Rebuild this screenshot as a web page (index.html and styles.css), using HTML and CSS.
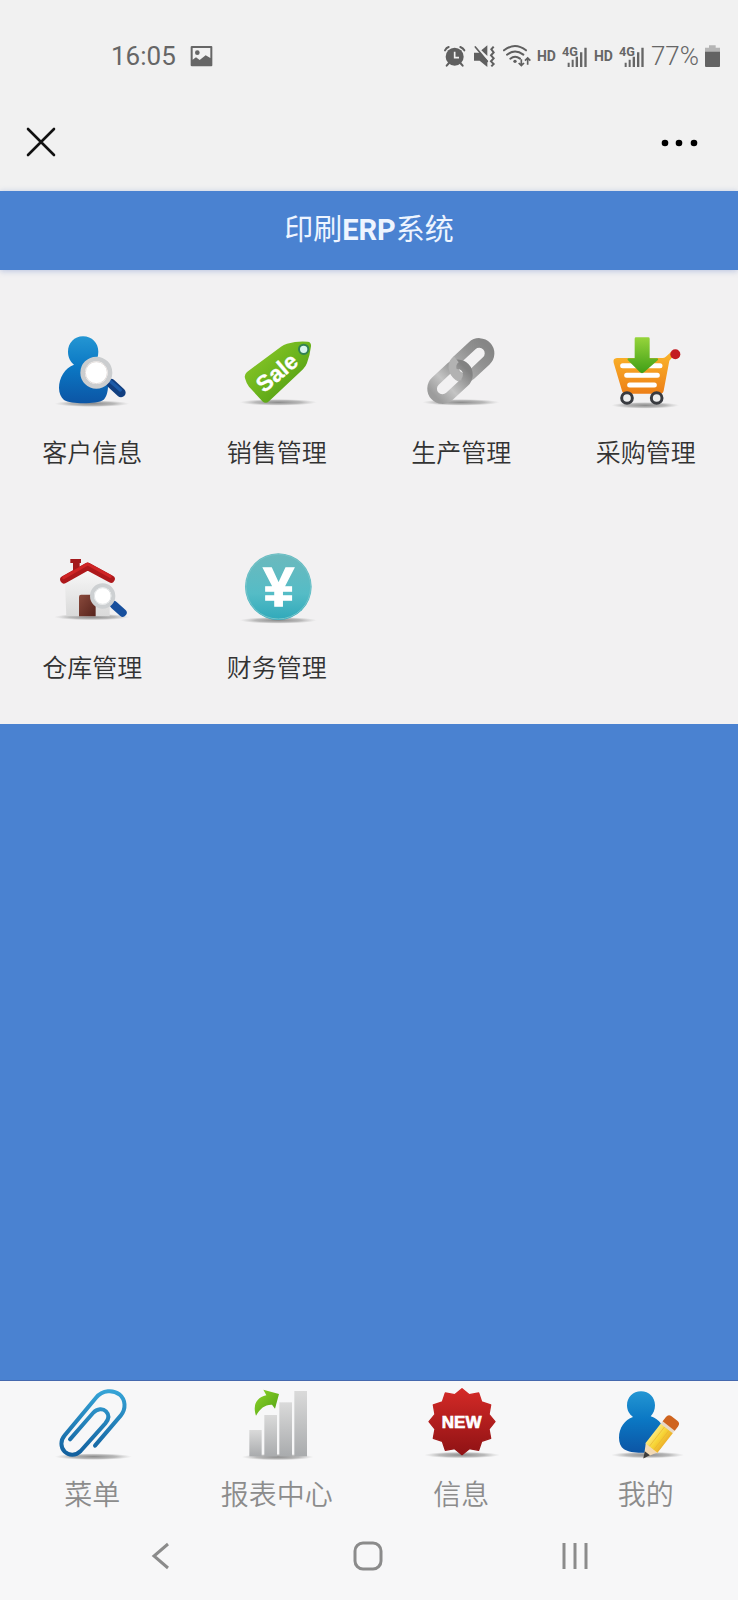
FILE: index.html
```
<!DOCTYPE html>
<html lang="zh-CN">
<head>
  <meta charset="utf-8">
  <meta name="viewport" content="width=device-width, initial-scale=1.0">
  <title>印刷ERP系统</title>
  <link rel="stylesheet" href="styles.css">
</head>
<body>
  <div class="status">
    <span class="status__time">16:05</span>
    <svg class="status__photo" viewBox="570 74 69 66">
      <path fill="#666" fill-rule="evenodd" d="M576 77h58q3 0 3 3v55q0 3-3 3h-58q-4 0-4-3V80q0-3 4-3zM578 83v35l10-7 11 8 18-14 14 8V83z"/>
      <circle cx="592" cy="97" r="7" fill="#666"/>
    </svg>
    <div class="status__right">
      <svg class="status__icon" viewBox="36 66 72 78">
        <g fill="none" stroke="#5f5f5f" stroke-width="6" stroke-linecap="round">
          <path d="M42 88q4-8 11-10M88 78q8 3 12 10M54 126l-7 8M88 126l7 8"/>
        </g>
        <circle cx="71" cy="107" r="27" fill="#5f5f5f"/>
        <path d="M71 92v18h13" fill="none" stroke="#f1f1f1" stroke-width="5"/>
      </svg>
      <svg class="status__icon" viewBox="130 66 72 78">
        <path fill="#5f5f5f" d="M133 95h17l23 23v20l-23-19h-17zM155 88l18-15v32z"/>
        <path d="M137 78l36 43" stroke="#5f5f5f" stroke-width="5" stroke-linecap="round"/>
        <path d="M192 77l-7 8 7 9-8 9 8 9-8 9 8 8-7 7" fill="none" stroke="#5f5f5f" stroke-width="6"/>
      </svg>
      <svg class="status__wifi" viewBox="222 66 84 78">
        <g fill="none" stroke="#5f5f5f" stroke-width="6" stroke-linecap="round">
          <path d="M225 88q33-26 66 0M234 101q24-19 49 0M244 113q14-11 29 0"/>
        </g>
        <circle cx="258" cy="121" r="5" fill="#5f5f5f"/>
        <path d="M277 115v17M269 126l8 8 8-8M296 131v-18M288 119l8-8 8 8" fill="none" stroke="#5f5f5f" stroke-width="5"/>
      </svg>
      <span class="status__hd">HD</span>
      <svg class="status__signal" viewBox="394 66 78 78">
        <text class="status__net" x="394" y="104">4G</text>
        <path fill="#666" d="M411 125h6v13h-6zM423 116h6v22h-6zM435 107h7v31h-7zM448 94h7v44h-7zM461 80h7v58h-7z"/>
      </svg>
      <span class="status__hd">HD</span>
      <svg class="status__signal" viewBox="394 66 78 78">
        <text class="status__net" x="394" y="104">4G</text>
        <path fill="#666" d="M411 125h6v13h-6zM423 116h6v22h-6zM435 107h7v31h-7zM448 94h7v44h-7zM461 80h7v58h-7z"/>
      </svg>
      <span class="status__percent">77%</span>
      <svg class="status__battery" viewBox="825 66 45 78">
        <path fill="#b5b5b5" d="M825 80h12v-7h20v7h13v14h-45z"/>
        <path fill="#636363" d="M825 92h45v43q0 3-3 3h-39q-3 0-3-3z"/>
      </svg>
    </div>
  </div>

  <div class="toolbar">
    <button class="toolbar__btn" type="button" aria-label="关闭">
      <svg viewBox="0 0 32 32"><path d="M3 3l26 26M29 3L3 29" fill="none" stroke="#111" stroke-width="2.6" stroke-linecap="round"/></svg>
    </button>
    <button class="toolbar__btn toolbar__btn--more" type="button" aria-label="更多">
      <svg viewBox="0 0 38 32"><g fill="#000"><circle cx="4" cy="17" r="3.3"/><circle cx="18" cy="17" r="3.3"/><circle cx="33" cy="17" r="3.3"/></g></svg>
    </button>
  </div>

  <header class="header">
    <h1 class="header__title">印刷<b>ERP</b>系统</h1>
  </header>

  <main class="apps">
    <a class="app" href="#customer">
      <svg class="app__icon" viewBox="97 66 240 240">
        <defs>
          <linearGradient id="user" x1="0" y1="0" x2="0" y2="1"><stop offset="0" stop-color="#2496d3"/><stop offset=".45" stop-color="#0b78c4"/><stop offset="1" stop-color="#0c55a5"/></linearGradient>
          <radialGradient id="shade"><stop offset="0" stop-color="#8a8a8a"/><stop offset=".6" stop-color="#a0a0a0" stop-opacity=".7"/><stop offset="1" stop-color="#bbb" stop-opacity="0"/></radialGradient>
        </defs>
        <ellipse cx="217" cy="281" rx="112" ry="10" fill="url(#shade)"/>
        <path fill="url(#user)" d="M190 79c27 0 46 20 46 46 0 15-5 26-12 35 25 12 41 38 41 68 0 18-5 34-14 42-18 12-96 14-118 0-9-8-15-20-15-36 0-32 18-60 45-70-11-9-18-22-18-39 0-26 19-46 45-46z"/>
        <path d="M274 220l30 28" stroke="#123f80" stroke-width="28" stroke-linecap="round"/>
        <path d="M270 212l32 28" stroke="#1c5ba8" stroke-width="10" stroke-linecap="round"/>
        <circle cx="230" cy="188" r="41" fill="#fff" stroke="#cbcdcf" stroke-width="14"/>
        <circle cx="230" cy="188" r="33" fill="#fff" stroke="#e2dcda" stroke-width="3"/>
      </svg>
      <span class="app__name">客户信息</span>
    </a>
    <a class="app" href="#sales">
      <svg class="app__icon" viewBox="650 66 240 240">
        <defs>
          <linearGradient id="tag" x1="0" y1="0" x2="1" y2="1"><stop offset="0" stop-color="#93cc2d"/><stop offset=".5" stop-color="#6cb41c"/><stop offset="1" stop-color="#46920f"/></linearGradient>
        </defs>
        <ellipse cx="774" cy="277" rx="116" ry="10" fill="url(#shade)"/>
        <path fill="url(#tag)" d="M680 186q-9 8-6 19 4 15 12 25l40 44q10 9 20 0l102-96q8-8 12-19 9-24 12-50 1-13-10-14-30-3-62 6-10 3-18 9z"/>
        <circle cx="850" cy="118" r="14" fill="#d8f4ee" stroke="#318153" stroke-width="6"/>
        <text class="icon-text" x="770" y="211" font-size="68" transform="rotate(-40 770 188)" text-anchor="middle">Sale</text>
      </svg>
      <span class="app__name">销售管理</span>
    </a>
    <a class="app" href="#production">
      <svg class="app__icon" viewBox="94 66 240 240">
        <defs>
          <linearGradient id="linkTop" x1="0" y1="0" x2="1" y2="0"><stop offset="0" stop-color="#b4b4b4"/><stop offset=".6" stop-color="#929292"/><stop offset="1" stop-color="#868686"/></linearGradient>
          <linearGradient id="linkLow" x1="0" y1="0" x2="1" y2="0"><stop offset="0" stop-color="#9c9c9c"/><stop offset=".4" stop-color="#c4c4c4"/><stop offset="1" stop-color="#828282"/></linearGradient>
        </defs>
        <ellipse cx="214" cy="277" rx="116" ry="10" fill="url(#shade)"/>
        <g fill="none" stroke-width="29">
          <rect x="184" y="120" width="124" height="62" rx="31" stroke="url(#linkTop)" transform="rotate(-43 246 151)"/>
          <rect x="119" y="184" width="124" height="62" rx="31" stroke="url(#linkLow)" transform="rotate(-43 181 215)"/>
          <path d="M200 148q-18 14-9 36 8 14 25 16" stroke="#b2b2b2" stroke-width="23"/>
        </g>
      </svg>
      <span class="app__name">生产管理</span>
    </a>
    <a class="app" href="#purchase">
      <svg class="app__icon" viewBox="647 66 240 240">
        <defs>
          <linearGradient id="cart" x1="0" y1="0" x2="0" y2="1"><stop offset="0" stop-color="#fbb62b"/><stop offset="1" stop-color="#ed7f17"/></linearGradient>
          <linearGradient id="down" x1="0" y1="0" x2="0" y2="1"><stop offset="0" stop-color="#96d43b"/><stop offset="1" stop-color="#3f9e16"/></linearGradient>
        </defs>
        <ellipse cx="765" cy="286" rx="102" ry="10" fill="url(#shade)"/>
        <path fill="url(#cart)" d="M680 144h138q6 0 10-5l15-14 9 10-15 17-17 90q-2 9-10 9H705q-8 0-10-9l-25-84q-3-13 10-14z"/>
        <path d="M697 167h112M709 196h92M718 225h74" stroke="#fff" stroke-width="15" stroke-linecap="round"/>
        <path fill="url(#down)" d="M733 86q0-4 4-4h37q4 0 4 4v59h22q6 1 2 6l-41 36q-6 5-12 0l-36-36q-4-5 2-6h18z"/>
        <circle cx="855" cy="133" r="15" fill="#c31b20"/>
        <circle cx="710" cy="264" r="16" fill="#eee" stroke="#393b40" stroke-width="9"/>
        <circle cx="799" cy="264" r="16" fill="#eee" stroke="#393b40" stroke-width="9"/>
      </svg>
      <span class="app__name">采购管理</span>
    </a>
    <a class="app" href="#warehouse">
      <svg class="app__icon" viewBox="97 51 240 240">
        <defs>
          <linearGradient id="wall" x1="0" y1="0" x2="0" y2="1"><stop offset="0" stop-color="#fafafa"/><stop offset="1" stop-color="#d9d9d9"/></linearGradient>
          <linearGradient id="door" x1="0" y1="0" x2="1" y2="1"><stop offset="0" stop-color="#8a4a3c"/><stop offset="1" stop-color="#56231c"/></linearGradient>
        </defs>
        <ellipse cx="217" cy="261" rx="114" ry="10" fill="url(#shade)"/>
        <path fill="url(#wall)" d="M136 158l68-50 66 50v101H140z"/>
        <path fill="url(#door)" d="M178 200q0-6 6-6h38q6 0 6 6v59h-50z"/>
        <path fill="#a3191c" d="M152 87h32v12h-4v24l-20 10V99h-8z"/>
        <path d="M133 149l71-40 70 38" fill="none" stroke="#ad181b" stroke-width="23" stroke-linecap="round" stroke-linejoin="round"/>
        <path d="M132 143l72-41 68 37" fill="none" stroke="#cf2425" stroke-width="9" stroke-linecap="round" stroke-linejoin="round"/>
        <path d="M283 225l26 23" stroke="#174f9d" stroke-width="24" stroke-linecap="round"/>
        <circle cx="249" cy="198" r="32" fill="#fff" stroke="#cdd0d2" stroke-width="12"/>
        <circle cx="249" cy="198" r="25" fill="#fff" stroke="#e1e4e5" stroke-width="3"/>
      </svg>
      <span class="app__name">仓库管理</span>
    </a>
    <a class="app" href="#finance">
      <svg class="app__icon" viewBox="650 51 240 240">
        <defs>
          <linearGradient id="coin" x1="0" y1="0" x2="0" y2="1"><stop offset="0" stop-color="#6cb9bd"/><stop offset=".6" stop-color="#55bcc6"/><stop offset="1" stop-color="#30a9ba"/></linearGradient>
        </defs>
        <ellipse cx="774" cy="271" rx="116" ry="10" fill="url(#shade)"/>
        <circle cx="774" cy="170" r="100" fill="url(#coin)"/>
        <circle cx="774" cy="170" r="97" fill="none" stroke="#75c4ca" stroke-width="3"/>
        <text class="icon-text icon-text--yen" x="775" y="227" font-size="166" text-anchor="middle">¥</text>
      </svg>
      <span class="app__name">财务管理</span>
    </a>
  </main>

  <nav class="tabs">
    <a class="tab" href="#menu">
      <svg class="tab__icon" viewBox="156 48 240 240">
        <defs>
          <linearGradient id="clip" x1="0" y1="0" x2="0" y2="1"><stop offset="0" stop-color="#35a3d6"/><stop offset="1" stop-color="#12609e"/></linearGradient>
        </defs>
        <ellipse cx="280" cy="260" rx="116" ry="10" fill="url(#shade)"/>
        <path d="M210 208l69-79c13-14 30-14 39-5 10 10 9 23-2 36l-74 83c-15 15-36 14-48 2-13-14-13-34 0-49l94-113c20-24 52-24 70-10 19 16 21 43 4 64l-77 90" fill="none" stroke="url(#clip)" stroke-width="12" stroke-linecap="round"/>
      </svg>
      <span class="tab__name">菜单</span>
    </a>
    <a class="tab" href="#report">
      <svg class="tab__icon" viewBox="710 48 240 240">
        <defs>
          <linearGradient id="bar" x1="0" y1="0" x2="0" y2="1"><stop offset="0" stop-color="#dadada"/><stop offset="1" stop-color="#a9abad"/></linearGradient>
          <linearGradient id="grow" x1="0" y1="0" x2="1" y2="1"><stop offset="0" stop-color="#8fd42b"/><stop offset="1" stop-color="#4ea012"/></linearGradient>
        </defs>
        <ellipse cx="832" cy="261" rx="108" ry="10" fill="url(#shade)"/>
        <g fill="url(#bar)">
          <rect x="747" y="180" width="37" height="79"/>
          <rect x="792" y="135" width="38" height="124"/>
          <rect x="837" y="97" width="38" height="162"/>
          <rect x="882" y="63" width="38" height="196"/>
        </g>
        <path fill="url(#grow)" d="M789 59l47 13-12 44-9-12c-21-1-35 11-48 33-11-33 2-54 31-61z"/>
      </svg>
      <span class="tab__name">报表中心</span>
    </a>
    <a class="tab" href="#message">
      <svg class="tab__icon" viewBox="160 48 240 240">
        <defs>
          <linearGradient id="badge" x1="0" y1="0" x2="0" y2="1"><stop offset="0" stop-color="#d42a27"/><stop offset="1" stop-color="#8f1214"/></linearGradient>
        </defs>
        <ellipse cx="283" cy="255" rx="114" ry="10" fill="url(#shade)"/>
        <polygon fill="url(#badge)" stroke="url(#badge)" stroke-width="4" stroke-linejoin="round" points="283,56 305,74 333,69 342,96 369,105 364,133 382,155 364,177 369,205 342,214 333,241 305,236 283,254 261,236 233,241 224,214 197,205 202,177 184,155 202,133 197,105 224,96 233,69 261,74"/>
        <text class="icon-text icon-text--new" x="282" y="174" font-size="51" text-anchor="middle">NEW</text>
      </svg>
      <span class="tab__name">信息</span>
    </a>
    <a class="tab" href="#mine">
      <svg class="tab__icon" viewBox="713 48 240 240">
        <defs>
          <linearGradient id="pencil" x1="0" y1="0" x2="1" y2="0"><stop offset="0" stop-color="#fbe77a"/><stop offset=".5" stop-color="#f7d536"/><stop offset="1" stop-color="#edb12b"/></linearGradient>
        </defs>
        <ellipse cx="838" cy="255" rx="110" ry="10" fill="url(#shade)"/>
        <path fill="url(#user)" d="M818 64c24 0 42 18 42 42 0 14-5 25-13 33 27 9 42 31 42 57 0 19-6 34-16 42-20 13-83 15-106 0-10-8-15-20-15-35 0-30 17-53 42-62-11-8-18-20-18-35 0-24 18-42 42-42z"/>
        <g transform="translate(826 264) rotate(38)">
          <path fill="#f2d9b5" d="M0 0l-23-40h46z"/>
          <path fill="#3c3c3c" d="M0 2l-10-20h20z"/>
          <rect x="-23" y="-114" width="46" height="76" fill="url(#pencil)"/>
          <path d="M-8-112v73M9-112v73" stroke="#e9b52e" stroke-width="2"/>
          <rect x="-23" y="-125" width="46" height="13" fill="#e7d9c6"/>
          <path fill="#cf641f" d="M-23-122v-16q0-12 12-12H11q12 0 12 12v16z"/>
        </g>
      </svg>
      <span class="tab__name">我的</span>
    </a>
  </nav>

  <div class="sysnav">
    <button class="sysnav__btn" type="button" aria-label="返回">
      <svg viewBox="0 0 32 32"><path d="M23 4L9 16l14 12" fill="none" stroke="#8b8b8b" stroke-width="3"/></svg>
    </button>
    <button class="sysnav__btn" type="button" aria-label="主页">
      <svg viewBox="0 0 32 32"><rect x="3" y="3" width="26" height="26" rx="8" fill="none" stroke="#8b8b8b" stroke-width="3"/></svg>
    </button>
    <button class="sysnav__btn" type="button" aria-label="最近任务">
      <svg viewBox="0 0 32 32"><path d="M5 3v26M16 3v26M27 3v26" fill="none" stroke="#8b8b8b" stroke-width="3"/></svg>
    </button>
  </div>
</body>
</html>
```
FILE: styles.css
```
* {
  box-sizing: border-box;
}
body {
  display: flex;
  flex-direction: column;
  margin: 0;
  min-height: 100vh;
  background: #4a82d1;
  font-family: Roboto, "Noto Sans CJK SC", sans-serif;
}
a {
  color: inherit;
  text-decoration: none;
}
button {
  padding: 0;
  border: 0;
  background: none;
}
svg {
  display: block;
}

/* status bar */
.status {
  display: flex;
  align-items: center;
  height: 112px;
  padding: 0 18px 0 111px;
  background: #f1f1f1;
  color: #666;
  font-size: 26px;
}
.status__photo {
  width: 23px;
  height: 22px;
  margin-left: 14px;
}
.status__right {
  display: flex;
  align-items: center;
  gap: 6px;
  margin-left: auto;
}
.status__icon {
  width: 24px;
  height: 26px;
}
.status__wifi {
  width: 28px;
  height: 26px;
}
.status__signal {
  width: 26px;
  height: 26px;
}
.status__battery {
  width: 15px;
  height: 26px;
}
.status__hd {
  font-size: 14px;
  font-weight: 700;
}
.status__net {
  fill: #666;
  font-size: 38px;
  font-weight: 700;
}
.status__percent {
  font-weight: 300;
}

/* close / more */
.toolbar {
  display: flex;
  align-items: center;
  justify-content: space-between;
  height: 79px;
  padding: 0 39px 20px 25px;
  background: #f1f1f1;
}
.toolbar__btn {
  width: 32px;
  height: 32px;
}
.toolbar__btn--more {
  width: 38px;
}

.header {
  z-index: 1;
  display: flex;
  align-items: center;
  justify-content: center;
  height: 79px;
  padding-bottom: 2px;
  background: #4a82d1;
  box-shadow: 0 1px 6px rgba(74, 110, 190, 0.35);
}
.header__title {
  margin: 0;
  color: #eef5ff;
  font-size: 29px;
  font-weight: 400;
  line-height: 40px;
}
.header__title b {
  font-weight: 700;
}

/* app grid */
.apps {
  display: grid;
  grid-template-columns: repeat(4, 1fr);
  padding-top: 24px;
  background: #f2f1f2;
}
.app {
  display: flex;
  flex-direction: column;
  align-items: center;
  height: 215px;
  padding-top: 38px;
}
.app__icon,
.tab__icon {
  width: 80px;
  height: 80px;
}
.app__name {
  margin-top: 22px;
  color: #333;
  font-size: 25px;
  font-weight: 350;
  line-height: 40px;
}

.icon-text {
  fill: #fff;
  font-family: "Liberation Sans", sans-serif;
  font-weight: 700;
  stroke: #fff;
  stroke-width: 1;
}
.icon-text--yen {
  stroke-width: 4;
}
.icon-text--new {
  stroke-width: 2;
}

/* bottom tabs */
.tabs {
  display: grid;
  grid-template-columns: repeat(4, 1fr);
  margin-top: auto;
  padding-top: 5px;
  background: #f7f7f8;
  border-top: 1px solid #4468ae;
}
.tab {
  display: flex;
  flex-direction: column;
  align-items: center;
}
.tab__name {
  margin-top: 12px;
  color: #8c8c8c;
  font-size: 28px;
  font-weight: 350;
  line-height: 36px;
}

/* android buttons */
.sysnav {
  display: flex;
  justify-content: space-around;
  align-items: center;
  height: 86px;
  padding: 0 60px 2px 57px;
  background: #f7f7f8;
}
.sysnav__btn {
  width: 32px;
  height: 32px;
}
```
